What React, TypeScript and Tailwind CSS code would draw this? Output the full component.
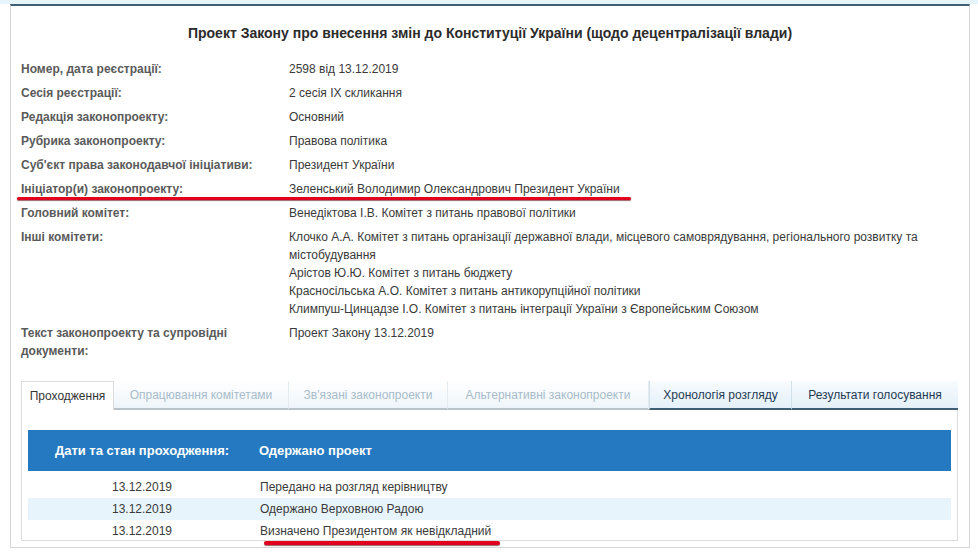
const ROWS: { label: string; values: string[] }[] = [
  { label: "Номер, дата реєстрації:", values: ["2598 від 13.12.2019"] },
  { label: "Сесія реєстрації:", values: ["2 сесія IX скликання"] },
  { label: "Редакція законопроекту:", values: ["Основний"] },
  { label: "Рубрика законопроекту:", values: ["Правова політика"] },
  { label: "Суб'єкт права законодавчої ініціативи:", values: ["Президент України"] },
  { label: "Ініціатор(и) законопроекту:", values: ["Зеленський Володимир Олександрович Президент України"] },
  { label: "Головний комітет:", values: ["Венедіктова І.В. Комітет з питань правової політики"] },
  {
    label: "Інші комітети:",
    values: [
      "Клочко А.А. Комітет з питань організації державної влади, місцевого самоврядування, регіонального розвитку та містобудування",
      "Арістов Ю.Ю. Комітет з питань бюджету",
      "Красносільська А.О. Комітет з питань антикорупційної політики",
      "Климпуш-Цинцадзе І.О. Комітет з питань інтеграції України з Європейським Союзом",
    ],
  },
  { label: "Текст законопроекту та супровідні документи:", values: ["Проект Закону 13.12.2019"] },
];

const TABS: { label: string; w: string; kind: "active" | "disabled" | "normal" }[] = [
  { label: "Проходження", w: "w-[93px]", kind: "active" },
  { label: "Опрацювання комітетами", w: "w-[175px]", kind: "disabled" },
  { label: "Зв'язані законопроекти", w: "w-[159px]", kind: "disabled" },
  { label: "Альтернативні законопроекти", w: "w-[201px]", kind: "disabled" },
  { label: "Хронологія розгляду", w: "w-[142px]", kind: "normal" },
  { label: "Результати голосування", w: "w-[167px]", kind: "normal" },
];

const EVENTS = [
  "Передано на розгляд керівництву",
  "Одержано Верховною Радою",
  "Визначено Президентом як невідкладний",
];

function RedMark({ className }: { className: string }) {
  return (
    <div
      className={`pointer-events-none absolute h-[3px] rounded-full bg-[#e0001e] shadow-[0_1px_1px_rgba(90,0,0,0.6)] ${className}`}
    />
  );
}

export default function App() {
  return (
    <div className="relative h-[553px] w-[978px] overflow-hidden bg-white font-['Liberation_Sans',Arial,sans-serif] text-[12px]">
      <div className="h-[4px] bg-[#e6f5fc]" />
      <div className="ml-[10px] w-[960px] border-x border-b border-t-2 border-x-[#d6d6d6] border-b-[#d6d6d6] border-t-[#3e6072] px-[10px] pb-[6px] pt-[19px]">
        <h1 className="text-center text-[14px] font-bold leading-[16px] text-[#2b2b2b]">
          Проект Закону про внесення змін до Конституції України (щодо децентралізації влади)
        </h1>

        <div className="mt-[19px]">
          {ROWS.map((row) => (
            <div key={row.label} className="flex pb-[6px] leading-[18px]">
              <div className="w-[268px] shrink-0 pr-[14px] font-bold text-[#5a5a5a]">{row.label}</div>
              <div className="flex-1 text-[#3a3a3a]">
                {row.values.map((v) => (
                  <div key={v}>{v}</div>
                ))}
              </div>
            </div>
          ))}
        </div>

        <div className="mt-[15px]">
          <div className="flex h-[29px]">
            {TABS.map((t) => {
              const tone =
                t.kind === "active"
                  ? "border-x border-t border-[#dcdcdc] bg-white text-[#333]"
                  : t.kind === "disabled"
                    ? "border-r border-b-2 border-r-[#e4ecf2] border-b-[#b9c2c8] bg-gradient-to-b from-[#ffffff] to-[#eef5fa] text-[#a8bccb]"
                    : "border-l border-b-2 border-l-[#d2e0ea] border-b-[#3e6072] bg-gradient-to-b from-[#f7fbfe] to-[#e4f0f9] text-[#1f3a55]";
              return (
                <div key={t.label} className={`flex items-center justify-center ${t.w} ${tone}`}>
                  {t.label}
                </div>
              );
            })}
          </div>
          <div className="mr-[1px] h-[131px] overflow-hidden border-x border-b border-[#dcdcdc] px-[6px] pt-[20px]">
            <div className="flex h-[41px] items-center bg-[#2479c1] text-[13px] font-bold text-white">
              <div className="w-[228px] text-center">Дати та стан проходження:</div>
              <div className="pl-[3px]">Одержано проект</div>
            </div>
            <div className="mt-[5px]">
              {EVENTS.map((e, i) => (
                <div key={e} className={`flex h-[22px] items-center text-[#3a3a3a] ${i === 1 ? "bg-[#e8f4fc]" : ""}`}>
                  <div className="w-[228px] text-center">13.12.2019</div>
                  <div className="pl-[4px]">{e}</div>
                </div>
              ))}
            </div>
          </div>
        </div>
      </div>

      <RedMark className="left-[17px] top-[197px] w-[614px]" />
      <RedMark className="left-[264px] top-[541px] h-[4px] w-[236px]" />
    </div>
  );
}
